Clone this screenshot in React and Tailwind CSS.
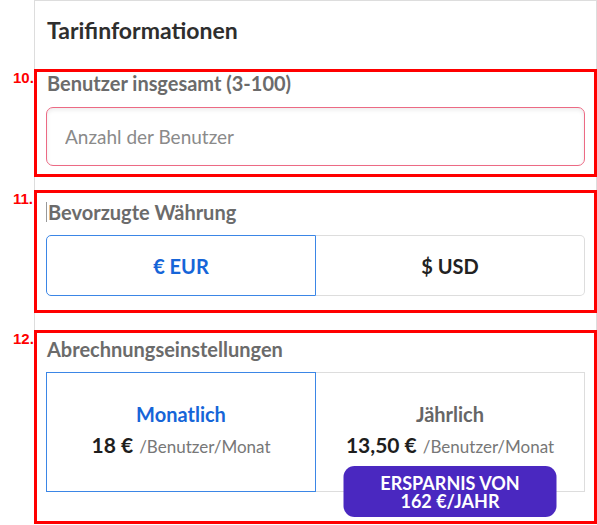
const SECTION = 'relative -mx-px border-[3px] border-[#ff0000] px-[9px]'

function Num({ children }) {
  return (
    <span className="absolute -left-[24px] -top-[2px] font-['Liberation_Sans',Arial,sans-serif] text-[15px] font-bold leading-none text-[#ff0000]">
      {children}
    </span>
  )
}

function Label({ children, cursor }) {
  return (
    <div className="flex items-center pl-px text-[20px] font-bold leading-[22px] text-[#6b6b6b]">
      {cursor && <span className="-ml-px mr-px inline-block h-[20px] w-px bg-[#999]" />}
      {children}
    </div>
  )
}

export default function App() {
  return (
    <div className="min-h-[525px] bg-white font-['Lato',sans-serif]">
      <div className="ml-[34px] w-[563px] border-x border-t border-[#dddddd]">
        <div className="h-[68px] pl-[12px] pt-[15px] text-[23px] font-bold leading-[28px] text-[#2e2e2e]">
          Tarifinformationen
        </div>

        <section className={`${SECTION} pb-[8px]`}>
          <Num>10.</Num>
          <Label>Benutzer insgesamt (3-100)</Label>
          <input
            placeholder="Anzahl der Benutzer"
            className="mt-[13px] block h-[59px] w-full rounded-[7px] border border-[#ec6a84] bg-white px-[18px] text-[19px] text-[#333] shadow-[inset_0_2px_4px_rgba(0,0,0,0.08)] outline-none placeholder:text-[#8a8a8a]"
          />
        </section>

        <section className={`${SECTION} mt-[13px] pb-[14px] pt-[8px]`}>
          <Num>11.</Num>
          <Label cursor>Bevorzugte Währung</Label>
          <div className="mt-[12px] flex h-[61px]">
            <button className="flex-1 rounded-l-[5px] border border-[#3b86e6] text-[20px] font-bold text-[#1665d8]">
              € EUR
            </button>
            <button className="flex-1 rounded-r-[5px] border border-l-0 border-[#dddddd] text-[20px] font-bold text-[#222]">
              $ USD
            </button>
          </div>
        </section>

        <section className={`${SECTION} mt-[17px] pb-[29px] pt-[5px]`}>
          <Num>12.</Num>
          <Label>Abrechnungseinstellungen</Label>
          <div className="mt-[12px] flex h-[120px]">
            <div className="flex flex-1 flex-col items-center border border-[#3b86e6] pt-[29px]">
              <div className="text-[20px] font-bold leading-[24px] text-[#1665d8]">Monatlich</div>
              <div className="mt-[6px] flex items-baseline gap-[6px] leading-[26px]">
                <span className="text-[21px] font-bold text-[#1e1e1e]">18 €</span>
                <span className="text-[17px] text-[#777]">/Benutzer/Monat</span>
              </div>
            </div>
            <div className="relative flex flex-1 flex-col items-center border border-l-0 border-[#dddddd] pt-[29px]">
              <div className="text-[20px] font-bold leading-[24px] text-[#666]">Jährlich</div>
              <div className="mt-[6px] flex items-baseline gap-[6px] leading-[26px]">
                <span className="text-[21px] font-bold text-[#1e1e1e]">13,50 €</span>
                <span className="text-[17px] text-[#777]">/Benutzer/Monat</span>
              </div>
              <div className="absolute left-1/2 top-[93px] flex h-[51px] w-[213px] -translate-x-1/2 flex-col items-center justify-center rounded-[11px] bg-[#4a28c0] text-center text-[18px] font-bold uppercase leading-[18px] text-white">
                <span>Ersparnis von</span>
                <span>162 €/Jahr</span>
              </div>
            </div>
          </div>
        </section>
      </div>
    </div>
  )
}
